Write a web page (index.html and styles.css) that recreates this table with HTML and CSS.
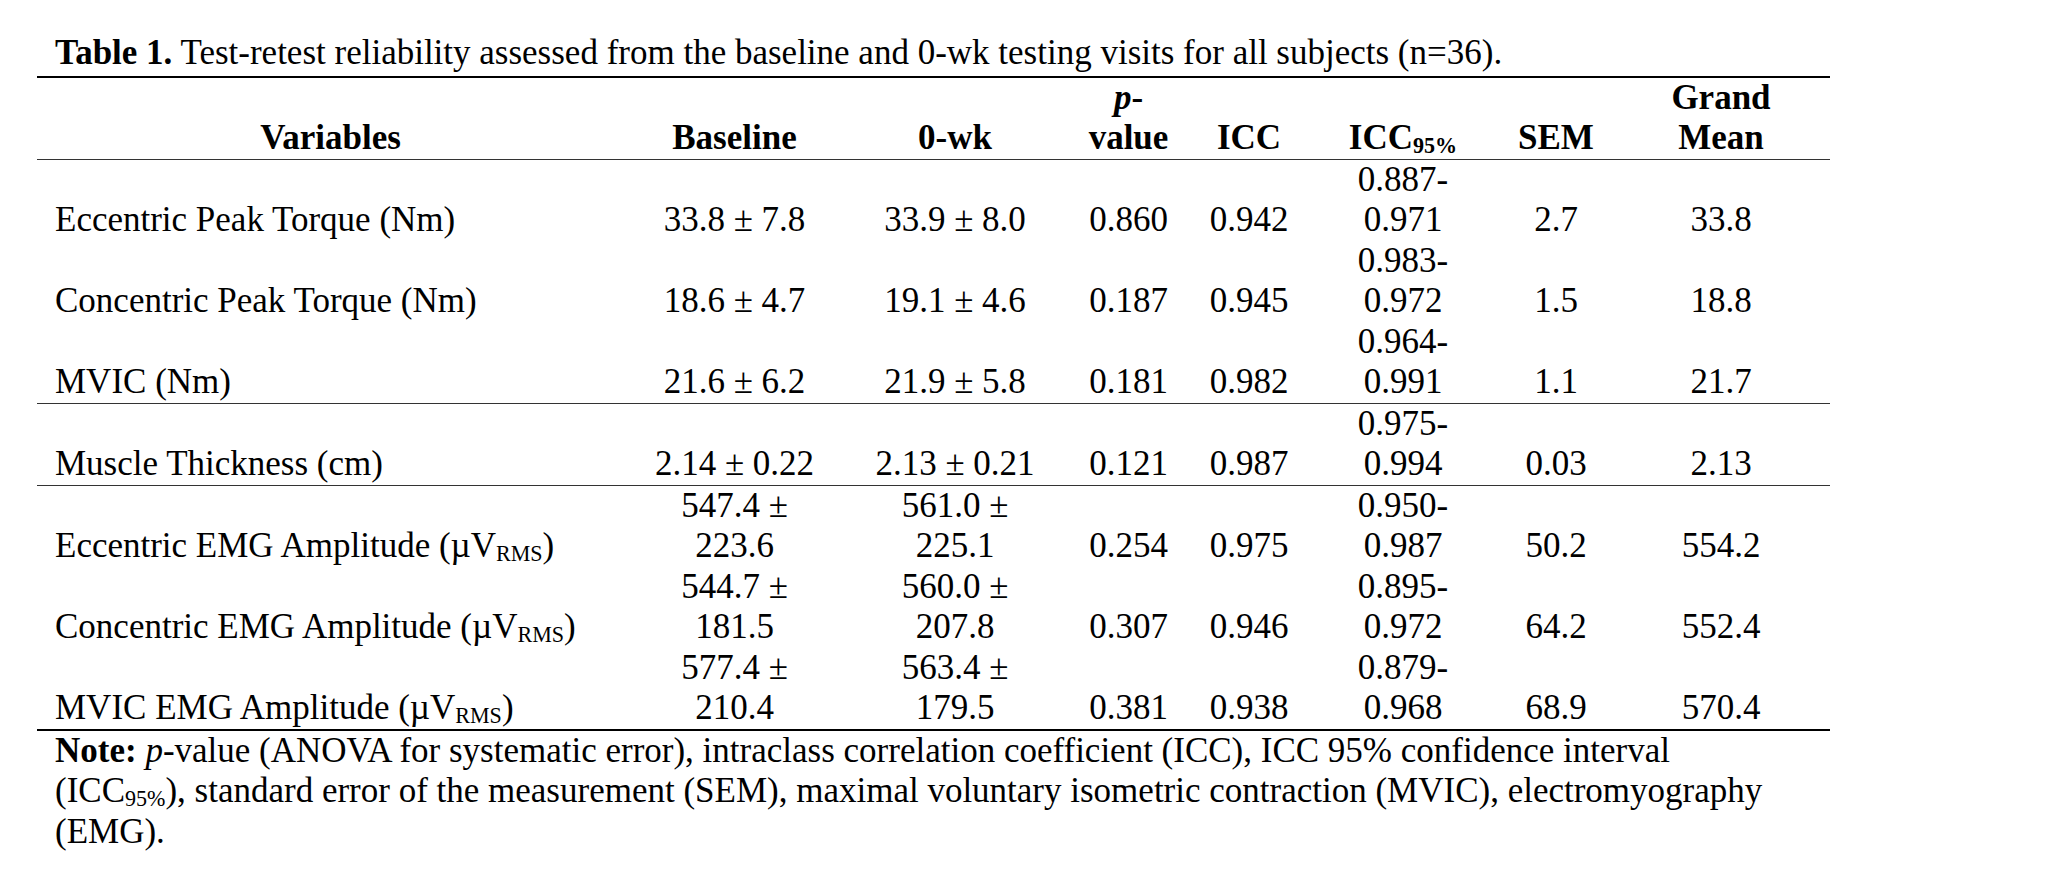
FILE: index.html
```html
<!DOCTYPE html>
<html lang="en">
<head>
<meta charset="utf-8">
<title>Table 1</title>
<link rel="stylesheet" href="styles.css">
</head>
<body>
<div class="page">
  <p class="caption"><b>Table 1.</b> Test-retest reliability assessed from the baseline and 0-wk testing visits for all subjects (n=36).</p>
  <table class="data">
    <colgroup>
      <col class="c-var">
      <col class="c-base">
      <col class="c-wk">
      <col class="c-p">
      <col class="c-icc">
      <col class="c-ci">
      <col class="c-sem">
      <col class="c-gm">
    </colgroup>
    <thead>
      <tr>
        <th>Variables</th>
        <th>Baseline</th>
        <th>0-wk</th>
        <th><i>p</i>-<br>value</th>
        <th>ICC</th>
        <th>ICC<sub>95%</sub></th>
        <th>SEM</th>
        <th>Grand<br>Mean</th>
      </tr>
    </thead>
    <tbody>
      <tr>
        <td class="var">Eccentric Peak Torque (Nm)</td>
        <td>33.8 ± 7.8</td>
        <td>33.9 ± 8.0</td>
        <td>0.860</td>
        <td>0.942</td>
        <td>0.887-<br>0.971</td>
        <td>2.7</td>
        <td>33.8</td>
      </tr>
      <tr>
        <td class="var">Concentric Peak Torque (Nm)</td>
        <td>18.6 ± 4.7</td>
        <td>19.1 ± 4.6</td>
        <td>0.187</td>
        <td>0.945</td>
        <td>0.983-<br>0.972</td>
        <td>1.5</td>
        <td>18.8</td>
      </tr>
      <tr>
        <td class="var">MVIC (Nm)</td>
        <td>21.6 ± 6.2</td>
        <td>21.9 ± 5.8</td>
        <td>0.181</td>
        <td>0.982</td>
        <td>0.964-<br>0.991</td>
        <td>1.1</td>
        <td>21.7</td>
      </tr>
    </tbody>
    <tbody>
      <tr>
        <td class="var">Muscle Thickness (cm)</td>
        <td>2.14 ± 0.22</td>
        <td>2.13 ± 0.21</td>
        <td>0.121</td>
        <td>0.987</td>
        <td>0.975-<br>0.994</td>
        <td>0.03</td>
        <td>2.13</td>
      </tr>
    </tbody>
    <tbody class="last">
      <tr>
        <td class="var">Eccentric EMG Amplitude (µV<sub>RMS</sub>)</td>
        <td>547.4 ±<br>223.6</td>
        <td>561.0 ±<br>225.1</td>
        <td>0.254</td>
        <td>0.975</td>
        <td>0.950-<br>0.987</td>
        <td>50.2</td>
        <td>554.2</td>
      </tr>
      <tr>
        <td class="var">Concentric EMG Amplitude (µV<sub>RMS</sub>)</td>
        <td>544.7 ±<br>181.5</td>
        <td>560.0 ±<br>207.8</td>
        <td>0.307</td>
        <td>0.946</td>
        <td>0.895-<br>0.972</td>
        <td>64.2</td>
        <td>552.4</td>
      </tr>
      <tr>
        <td class="var">MVIC EMG Amplitude (µV<sub>RMS</sub>)</td>
        <td>577.4 ±<br>210.4</td>
        <td>563.4 ±<br>179.5</td>
        <td>0.381</td>
        <td>0.938</td>
        <td>0.879-<br>0.968</td>
        <td>68.9</td>
        <td>570.4</td>
      </tr>
    </tbody>
  </table>
  <p class="note"><b>Note:</b> <i>p</i>-value (ANOVA for systematic error), intraclass correlation coefficient (ICC), ICC 95% confidence interval<br>(ICC<sub>95%</sub>), standard error of the measurement (SEM), maximal voluntary isometric contraction (MVIC), electromyography<br>(EMG).</p>
</div>
</body>
</html>
```

FILE: styles.css
```css
html, body {
  margin: 0;
  padding: 0;
  background: #ffffff;
}

body {
  font-family: "Liberation Serif", "Times New Roman", serif;
  font-size: 35px;
  line-height: 40.5px;
  color: #000000;
}

.page {
  width: 1793px;
  margin-left: 37px;
  padding-top: 33px;
}

.caption {
  margin: 0;
  padding: 0 18px 2px;
  white-space: nowrap;
}

.data {
  width: 1793px;
  border-collapse: collapse;
  table-layout: fixed;
  border-top: 2px solid #000000;
  border-bottom: 2px solid #000000;
}

.c-var { width: 587px; }
.c-base { width: 221px; }
.c-wk { width: 220px; }
.c-p { width: 127px; }
.c-icc { width: 114px; }
.c-ci { width: 194px; }
.c-sem { width: 112px; }
.c-gm { width: 218px; }

.data th,
.data td {
  padding: 0;
  text-align: center;
  vertical-align: bottom;
  white-space: nowrap;
}

.data th {
  font-weight: bold;
}

.data thead tr {
  border-bottom: 1px solid #333333;
}

.data tbody {
  border-bottom: 1px solid #333333;
}

.data tbody.last {
  border-bottom: 2px solid #000000;
}

.data tbody tr {
  height: 81px;
}

.data td.var {
  text-align: left;
  padding-left: 18px;
}

sub {
  font-size: 0.63em;
  line-height: 0;
  vertical-align: -0.2em;
}

.note {
  margin: 0;
  padding: 0 18px;
  white-space: nowrap;
}
```
